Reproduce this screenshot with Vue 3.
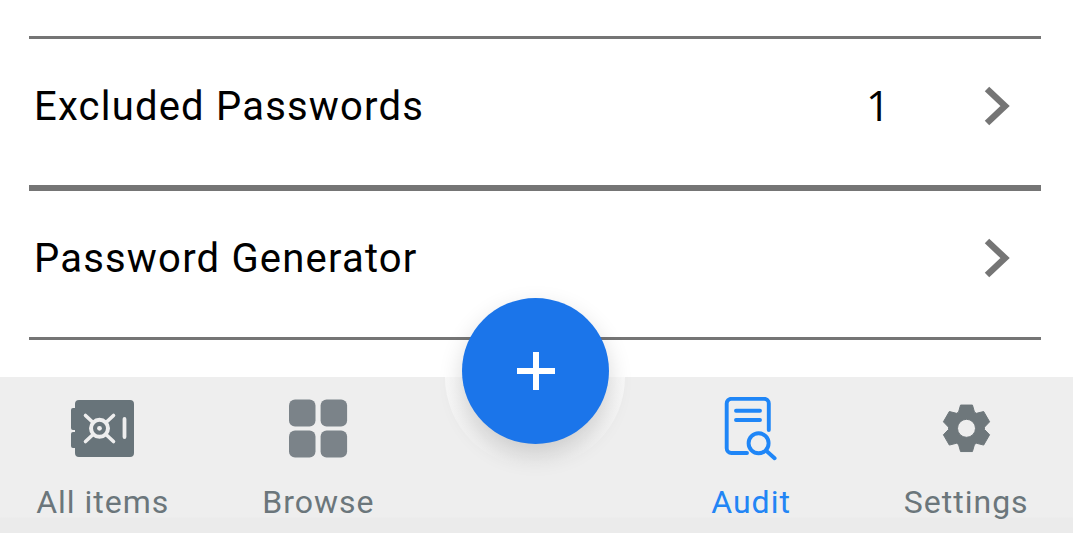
<script setup>
import { computed } from 'vue'

const gearPath = computed(() => {
  const cx = 32.5, cy = 31.3, R = 24, r = 18
  const pts = []
  for (let i = 0; i < 6; i++) {
    const a = (-90 + i * 60) * Math.PI / 180
    for (const [rad, off] of [[r, -0.46], [R, -0.25], [R, 0.25], [r, 0.46]]) {
      pts.push(`${(cx + rad * Math.cos(a + off)).toFixed(2)} ${(cy + rad * Math.sin(a + off)).toFixed(2)}`)
    }
  }
  return `M${pts.join('L')}Z M${cx + 9} ${cy}a9 9 0 1 0-18 0a9 9 0 1 0 18 0Z`
})
</script>

<template>
  <div class="screen">
    <main class="list">
      <div class="rule"></div>
      <div class="row">
        <span class="title">Excluded Passwords</span>
        <span class="count">1</span>
        <svg class="chev" width="28" height="40" viewBox="0 0 28 40"><path d="M4 3L22 20L4 37" fill="none" stroke="#757575" stroke-width="6.5"/></svg>
      </div>
      <div class="rule thick"></div>
      <div class="row">
        <span class="title">Password Generator</span>
        <svg class="chev" width="28" height="40" viewBox="0 0 28 40"><path d="M4 3L22 20L4 37" fill="none" stroke="#757575" stroke-width="6.5"/></svg>
      </div>
      <div class="rule"></div>
    </main>

    <nav class="bar">
      <div class="tab left1">
        <svg width="70" height="64" viewBox="0 0 70 64">
          <path fill="#68747a" d="M11 3h51a4 4 0 0 1 4 4v49a4 4 0 0 1-4 4H11a4 4 0 0 1-4-4V51H5a2 2 0 0 1-2-2V37a2 2 0 0 1 2-2h2V33H5a2 2 0 0 1-2-2V13a2 2 0 0 1 2-2h2V7a4 4 0 0 1 4-4Z"/>
          <g fill="none" stroke="#eeeeee" stroke-linecap="round">
            <circle cx="31.500" cy="31.300" r="8.500" stroke-width="4"/>
            <path stroke-width="3.600" d="M17.500 18.500l7 6.500M45.500 18.500l-7 6.500M17.500 44.500l7-6.500M45.500 44.500l-7-6.500"/>
            <path stroke-width="3.800" d="M56.500 22v18"/>
          </g>
          <circle cx="31.500" cy="31.300" r="2.400" fill="#eeeeee"/>
        </svg>
        <span class="label">All items</span>
      </div>
      <div class="tab left2">
        <svg width="70" height="64" viewBox="0 0 70 64" fill="#7b8389">
          <rect x="6" y="2.500" width="26.500" height="27" rx="6"/>
          <rect x="37.600" y="2.500" width="26.500" height="27" rx="6"/>
          <rect x="6" y="33.500" width="26.500" height="27" rx="6"/>
          <rect x="37.600" y="33.500" width="26.500" height="27" rx="6"/>
        </svg>
        <span class="label">Browse</span>
      </div>
      <div class="tab"></div>
      <div class="tab">
        <svg width="70" height="64" viewBox="0 0 70 64" fill="none" stroke="#1f86f7" stroke-width="3.900" stroke-linecap="round" stroke-linejoin="round">
          <path d="M52.800 33V6.500a4.700 4.700 0 0 0-4.700-4.700H15.400a4.700 4.700 0 0 0-4.700 4.700V51.300a4.700 4.700 0 0 0 4.700 4.700H31"/>
          <path d="M20 13.700H44M20 23H44"/>
          <circle cx="42.600" cy="46.300" r="10"/>
          <path d="M50 53.500L58.600 61.300"/>
        </svg>
        <span class="label active">Audit</span>
      </div>
      <div class="tab last">
        <svg width="70" height="64" viewBox="0 0 64 64"><path fill="#6e777b" fill-rule="evenodd" :d="gearPath" stroke="#6e777b" stroke-width="1" stroke-linejoin="round"/></svg>
        <span class="label">Settings</span>
      </div>
    </nav>

    <div class="halo"></div>
    <button class="fab" aria-label="Add">
      <svg width="38" height="38" viewBox="0 0 38 38"><path fill="#fff" d="M16 0h6v16h16v6H22v16h-6V22H0v-6h16Z"/></svg>
    </button>
  </div>
</template>

<style scoped>
.screen {
  position: relative;
  width: 1073px;
  height: 533px;
  overflow: hidden;
  display: flex;
  flex-direction: column;
  background: #fff;
  font-family: Roboto, sans-serif;
}
.list {
  flex: 1;
  padding: 36px 32px 0 29px;
}
.rule { height: 3px; background: #757575; }
.rule.thick { height: 6px; }
.row {
  height: 146px;
  box-sizing: border-box;
  display: flex;
  align-items: center;
  padding: 0 30px 12px 6px;
  color: #000;
}
.title { flex: 1; font-size: 40px; letter-spacing: 1.2px; margin-left: -1px; }
.count { font-size: 42px; margin: 0 93px 4px 0; font-family: "Open Sans", sans-serif; }
.chev { display: block; }
.bar {
  height: 156px;
  flex: none;
  display: grid;
  grid-template-columns: repeat(5, 1fr);
  background: linear-gradient(#eeeeee 0, #eeeeee 140px, #ebebeb 141px);
}
.tab {
  display: flex;
  flex-direction: column;
  align-items: center;
  padding-top: 20px;
}
.left1 { padding-right: 9px; }
.left2 { padding-right: 7px; }
.last { padding-left: 1px; }
.label {
  font-size: 32px;
  line-height: 36px;
  margin-top: 23px;
  letter-spacing: 1px;
  color: #6b767b;
}
.label.active { color: #2285f5; }
.halo {
  position: absolute;
  left: 445px;
  top: 287px;
  width: 180px;
  height: 180px;
  border-radius: 50%;
  background: linear-gradient(transparent 0, transparent 50%, #f9f9f9 50%, #f7f7f7 62%, #eeeeee 100%);
}
.fab {
  position: absolute;
  left: 462px;
  top: 298px;
  width: 147px;
  height: 146px;
  border: 0;
  padding: 0;
  border-radius: 50%;
  background: #1b75ea;
  box-shadow: 0 10px 24px rgba(0, 0, 0, 0.16);
  display: flex;
  align-items: center;
  justify-content: center;
}
</style>
